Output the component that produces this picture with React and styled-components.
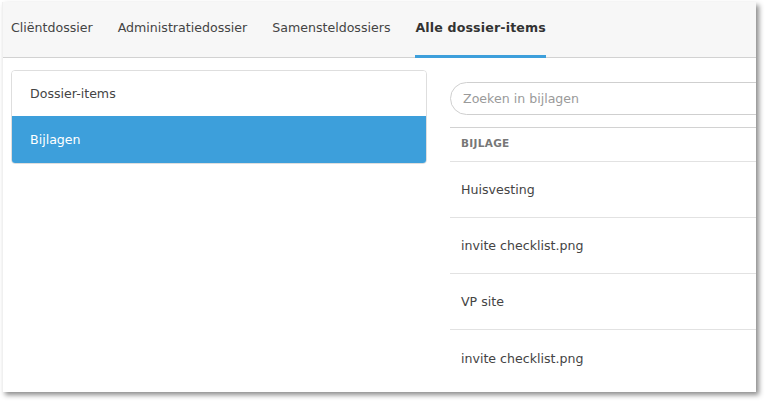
import React from "react";
import styled, { createGlobalStyle } from "styled-components";

const Global = createGlobalStyle`
  html, body { margin: 0; padding: 0; background: #ffffff; }
  body { font-family: "DejaVu Sans", Verdana, sans-serif; }
  * { box-sizing: border-box; }
`;

const Stage = styled.div`
  width: 766px;
  height: 402px;
  padding: 2px 0 0 2px;
  overflow: hidden;
`;

const Window = styled.div`
  width: 754px;
  height: 390px;
  background: #fff;
  border-left: 1px solid #f0f0f0;
  box-shadow: 3px 3px 5px rgba(0, 0, 0, 0.45);
  overflow: hidden;
  display: flex;
  flex-direction: column;
`;

const TabBar = styled.div`
  height: 56px;
  background: #f7f7f7;
  border-bottom: 1px solid #d2d2d2;
  display: flex;
  align-items: stretch;
  padding-left: 8px;
  gap: 25px;
  flex-shrink: 0;
`;

const Tab = styled.div`
  display: flex;
  align-items: center;
  font-size: 12.6px;
  color: ${(p) => (p.$active ? "#333" : "#444")};
  font-weight: ${(p) => (p.$active ? 700 : 400)};
  letter-spacing: ${(p) => (p.$active ? "0.15px" : "0")};
  border-bottom: 3px solid ${(p) => (p.$active ? "#3d9fdb" : "transparent")};
  padding-bottom: 2px;
  margin-bottom: -1px;
  white-space: nowrap;
`;

const Body = styled.div`
  display: flex;
  gap: 23px;
  padding: 12px 0 0 8px;
`;

const SideCard = styled.div`
  width: 416px;
  flex-shrink: 0;
  align-self: flex-start;
  border: 1px solid #dedede;
  border-radius: 4px;
  overflow: hidden;
`;

const SideItem = styled.div`
  height: ${(p) => (p.$first ? "45px" : "47px")};
  display: flex;
  align-items: center;
  padding-left: 18px;
  font-size: 12.6px;
  color: ${(p) => (p.$active ? "#fff" : "#444")};
  background: ${(p) => (p.$active ? "#3d9fdb" : "#fff")};
`;

const Main = styled.div`
  flex: 1;
  min-width: 340px;
  padding-top: 12px;
`;

const Search = styled.input`
  width: 360px;
  height: 33px;
  border: 1px solid #cfcfcf;
  border-radius: 17px;
  padding: 0 12px;
  font-family: "DejaVu Sans", Verdana, sans-serif;
  font-size: 12.6px;
  color: #444;
  outline: none;
  &::placeholder { color: #9a9a9a; }
`;

const Table = styled.div`
  margin-top: 12px;
  width: 360px;
  border-top: 1px solid #d2d2d2;
`;

const HeadRow = styled.div`
  height: 34px;
  display: flex;
  align-items: center;
  padding: 0 0 3px 11px;
  font-size: 10.5px;
  font-weight: 700;
  color: #777;
  letter-spacing: 0.3px;
  border-bottom: 1px solid #e2e2e2;
`;

const Row = styled.div`
  height: 56px;
  display: flex;
  align-items: center;
  padding-left: 11px;
  font-size: 12.6px;
  color: #444;
  border-bottom: 1px solid #e2e2e2;
  &:last-child { border-bottom: none; }
`;

const tabs = ["Cliëntdossier", "Administratiedossier", "Samensteldossiers", "Alle dossier-items"];
const rows = ["Huisvesting", "invite checklist.png", "VP site", "invite checklist.png"];

export default function App() {
  return (
    <>
      <Global />
      <Stage>
        <Window>
          <TabBar>
            {tabs.map((t, i) => (
              <Tab key={t} $active={i === 3}>{t}</Tab>
            ))}
          </TabBar>
          <Body>
            <SideCard>
              <SideItem $first>Dossier-items</SideItem>
              <SideItem $active>Bijlagen</SideItem>
            </SideCard>
            <Main>
              <Search placeholder="Zoeken in bijlagen" />
              <Table>
                <HeadRow>BIJLAGE</HeadRow>
                {rows.map((r, i) => (
                  <Row key={i}>{r}</Row>
                ))}
              </Table>
            </Main>
          </Body>
        </Window>
      </Stage>
    </>
  );
}
